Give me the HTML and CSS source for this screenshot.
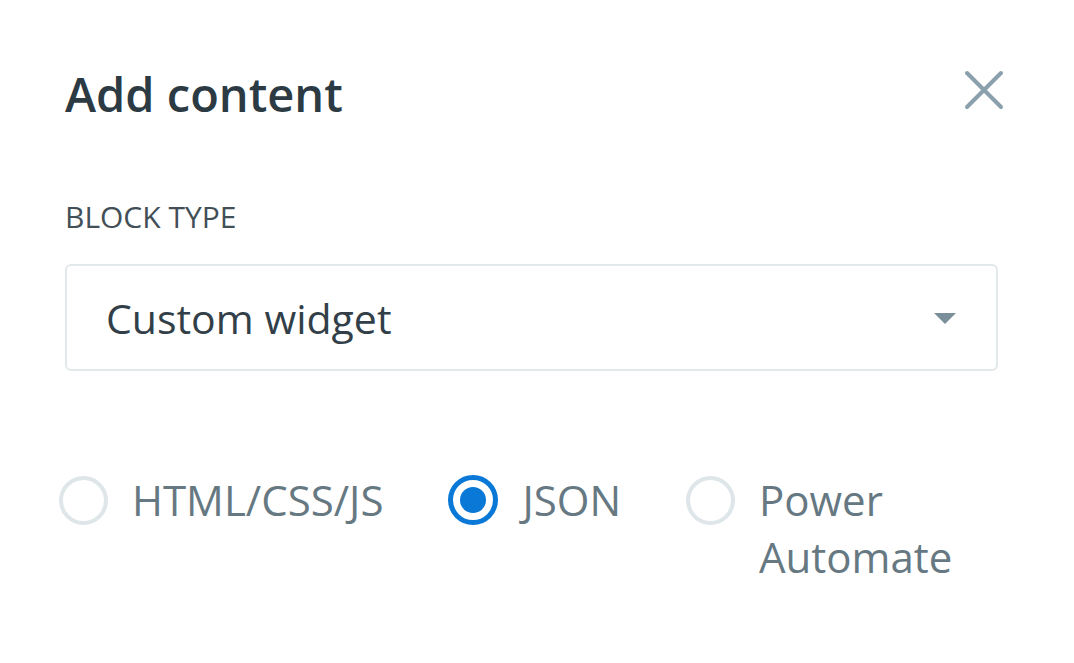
FILE: index.html
```html
<!DOCTYPE html>
<html>
<head>
<meta charset="utf-8">
<link rel="stylesheet" href="styles.css">
</head>
<body>
<div class="panel">
  <div class="header">
    <h1 class="title">Add content</h1>
    <button class="close" aria-label="Close">
      <svg width="40" height="40" viewBox="0 0 40 40"><path d="M3 3 L37 37 M37 3 L3 37" stroke="#8aa0ad" stroke-width="4" stroke-linecap="round" fill="none"/></svg>
    </button>
  </div>
  <div class="label">BLOCK TYPE</div>
  <div class="select">
    <span class="select-text">Custom widget</span>
    <svg class="caret" width="22" height="11" viewBox="0 0 22 11"><path d="M0 0 H22 L11 11 Z" fill="#7b8f9b"/></svg>
  </div>
  <div class="options">
    <label class="option">
      <span class="radio"></span>
      <span class="opt-text">HTML/CSS/JS</span>
    </label>
    <label class="option">
      <span class="radio checked"></span>
      <span class="opt-text">JSON</span>
    </label>
    <label class="option">
      <span class="radio"></span>
      <span class="opt-text wrap">Power Automate</span>
    </label>
  </div>
</div>
</body>
</html>
```
FILE: styles.css
```css
html, body {
  margin: 0;
  padding: 0;
  background: #ffffff;
}
body {
  font-family: "Open Sans", "Noto Sans", "Liberation Sans", sans-serif;
  color: #323f48;
}
.panel {
  width: 1074px;
  height: 663px;
  box-sizing: border-box;
  padding: 64px 70px 0 65px;
}
.header {
  display: flex;
  justify-content: space-between;
  align-items: center;
  height: 60px;
}
.title {
  margin: 0;
  font-size: 47px;
  line-height: 60px;
  font-weight: 600;
  color: #2c3a43;
}
.close {
  border: 0;
  background: none;
  padding: 0;
  margin-top: -8px;
  width: 40px;
  height: 40px;
  display: flex;
}
.label {
  margin-top: 75px;
  font-size: 30px;
  line-height: 36px;
  color: #434f57;
}
.select {
  margin-top: 29px;
  width: 933px;
  height: 107px;
  box-sizing: border-box;
  border: 2px solid #e3e8ea;
  border-radius: 6px;
  display: flex;
  align-items: center;
  justify-content: space-between;
  padding: 0 40px 0 39px;
}
.select-text {
  font-size: 41px;
  line-height: 56px;
  color: #323f48;
}
.caret {
  margin-top: 2px;
}
.options {
  margin-top: 100px;
  display: flex;
  align-items: flex-start;
  margin-left: -6px;
}
.option {
  display: flex;
  align-items: flex-start;
  gap: 24px;
  margin-right: 65px;
}
.radio {
  width: 49px;
  height: 49px;
  box-sizing: border-box;
  border: 4px solid #dee6e9;
  border-radius: 50%;
  flex: none;
  margin-top: 5px;
}
.radio.checked {
  width: 50px;
  height: 50px;
  margin-top: 4px;
  border: 5px solid #0a78d6;
  position: relative;
}
.radio.checked::after {
  content: "";
  position: absolute;
  left: 50%;
  top: 50%;
  width: 26px;
  height: 26px;
  margin: -13px 0 0 -13px;
  border-radius: 50%;
  background: #0a78d6;
}
.opt-text {
  font-size: 42px;
  line-height: 57px;
  color: #667882;
}
.opt-text.wrap {
  width: 200px;
}
```
